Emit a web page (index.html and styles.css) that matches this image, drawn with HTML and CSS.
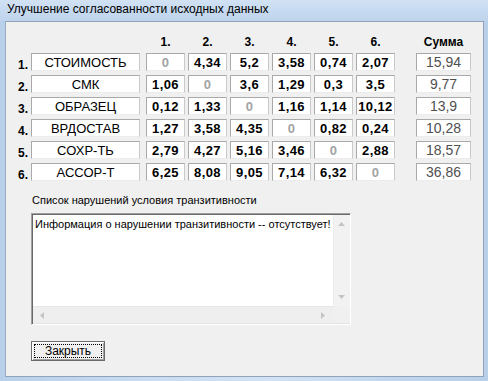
FILE: index.html
```html
<!DOCTYPE html>
<html lang="ru">
<head>
<meta charset="utf-8">
<title>Улучшение согласованности исходных данных</title>
<link rel="stylesheet" href="styles.css">
</head>
<body>
<div class="window">
  <div class="titlebar"><span class="title">Улучшение согласованности исходных данных</span></div>
  <div class="client">
    <div class="matrix">
      <div class="hd"></div><div class="hd"></div>
      <div class="hd">1.</div><div class="hd">2.</div><div class="hd">3.</div><div class="hd">4.</div><div class="hd">5.</div><div class="hd">6.</div>
      <div class="hd"></div><div class="hd sum-hd">Сумма</div>

      <div class="rl">1.</div><div class="name">СТОИМОСТЬ</div>
      <div class="cell diag">0</div><div class="cell">4,34</div><div class="cell">5,2</div><div class="cell">3,58</div><div class="cell">0,74</div><div class="cell">2,07</div>
      <div></div><div class="sum">15,94</div>

      <div class="rl">2.</div><div class="name">СМК</div>
      <div class="cell">1,06</div><div class="cell diag">0</div><div class="cell">3,6</div><div class="cell">1,29</div><div class="cell">0,3</div><div class="cell">3,5</div>
      <div></div><div class="sum">9,77</div>

      <div class="rl">3.</div><div class="name">ОБРАЗЕЦ</div>
      <div class="cell">0,12</div><div class="cell">1,33</div><div class="cell diag">0</div><div class="cell">1,16</div><div class="cell">1,14</div><div class="cell">10,12</div>
      <div></div><div class="sum">13,9</div>

      <div class="rl">4.</div><div class="name">ВРДОСТАВ</div>
      <div class="cell">1,27</div><div class="cell">3,58</div><div class="cell">4,35</div><div class="cell diag">0</div><div class="cell">0,82</div><div class="cell">0,24</div>
      <div></div><div class="sum">10,28</div>

      <div class="rl">5.</div><div class="name">СОХР-ТЬ</div>
      <div class="cell">2,79</div><div class="cell">4,27</div><div class="cell">5,16</div><div class="cell">3,46</div><div class="cell diag">0</div><div class="cell">2,88</div>
      <div></div><div class="sum">18,57</div>

      <div class="rl">6.</div><div class="name">АССОР-Т</div>
      <div class="cell">6,25</div><div class="cell">8,08</div><div class="cell">9,05</div><div class="cell">7,14</div><div class="cell">6,32</div><div class="cell diag">0</div>
      <div></div><div class="sum">36,86</div>
    </div>

    <div class="memo-label">Список нарушений условия транзитивности</div>
    <div class="memo">
      <div class="memo-text">Информация о нарушении транзитивности -- отсутствует!</div>
      <div class="vscroll">
        <svg class="arrow" width="7" height="4" viewBox="0 0 7 4"><path d="M0 4 L3.5 0 L7 4 Z" fill="#c4c4c4"/></svg>
        <svg class="arrow" width="7" height="4" viewBox="0 0 7 4"><path d="M0 0 L3.5 4 L7 0 Z" fill="#c4c4c4"/></svg>
      </div>
      <div class="hscroll">
        <svg class="arrow" width="4" height="7" viewBox="0 0 4 7"><path d="M4 0 L0 3.5 L4 7 Z" fill="#c4c4c4"/></svg>
        <svg class="arrow" width="4" height="7" viewBox="0 0 4 7"><path d="M0 0 L4 3.5 L0 7 Z" fill="#c4c4c4"/></svg>
      </div>
      <div class="corner"></div>
    </div>

    <button class="btn"><span class="focus">Закрыть</span></button>
  </div>
</div>
</body>
</html>
```
FILE: styles.css
```css
html, body {
  margin: 0;
  padding: 0;
}
body {
  width: 488px;
  height: 381px;
  overflow: hidden;
  background: linear-gradient(180deg, #c4d8ee 0%, #bcd3ec 60%, #b4cce8 100%);
  font-family: "Liberation Sans", Arial, sans-serif;
}
.window {
  width: 488px;
  height: 381px;
  display: flex;
  flex-direction: column;
  background: linear-gradient(90deg, #b9d0ea 0%, #c9dcf1 30%, #d3e3f4 55%, #c2d7ee 80%, #b8cfe9 100%);
}
.titlebar {
  height: 21px;
  flex: none;
  display: flex;
  align-items: center;
  padding-left: 7px;
  background: linear-gradient(180deg, #d2e2f4 0%, #c6daf0 50%, #bfd4ec 100%);
}
.title {
  font-family: "Liberation Sans", Arial, sans-serif;
  font-size: 12px;
  color: #000;
  position: relative;
  top: -2px;
}
.client {
  flex: 1;
  margin: 0 4px 4px 5px;
  background: #f0f0f0;
  border: 1px solid #8fa3ba;
  border-left-color: #97abc1;
  display: flex;
  flex-direction: column;
  align-items: flex-start;
}
.matrix {
  display: grid;
  grid-template-columns: 19px 115px repeat(6, 42px) 18px 55px;
  grid-template-rows: 14px repeat(6, 18px);
  row-gap: 4px;
  margin: 13px 0 0 6px;
}
.hd {
  font-weight: bold;
  font-size: 12px;
  line-height: 14px;
  text-align: center;
  width: 39px;
  color: #000;
}
.sum-hd {
  width: 55px;
}
.rl {
  font-weight: bold;
  font-size: 12px;
  line-height: 14px;
  padding: 5px 0 0 6px;
  color: #000;
}
.name, .cell, .sum {
  box-sizing: border-box;
  height: 18px;
  background: #fff;
  border: 1px solid #a9a9a9;
  border-right-color: #c9c9c9;
  border-bottom-color: #ececec;
  display: flex;
  align-items: center;
  justify-content: center;
  white-space: nowrap;
}
.name {
  width: 109px;
  font-size: 13px;
  color: #000;
}
.cell {
  width: 39px;
  font-size: 13px;
  font-weight: bold;
  letter-spacing: 0.4px;
  color: #000;
}
.cell.diag {
  color: #a3a3a3;
}
.sum {
  width: 55px;
  font-size: 14px;
  color: #505050;
}
.memo-label {
  margin: 12px 0 0 26px;
  font-size: 11px;
  line-height: 14px;
  color: #000;
}
.memo {
  margin: 6px 0 0 25px;
  box-sizing: border-box;
  width: 320px;
  height: 112px;
  background: #fff;
  border: 1px solid;
  border-color: #a0a0a0 #ffffff #ffffff #a0a0a0;
  box-shadow: inset 1px 1px 0 #696969, inset -1px -1px 0 #e3e3e3;
  padding: 1px 1px 1px 1px;
  display: grid;
  grid-template-columns: 1fr 17px;
  grid-template-rows: 1fr 17px;
}
.memo-text {
  font-size: 11px;
  line-height: 13px;
  padding: 3px 2px;
  color: #000;
  white-space: nowrap;
}
.vscroll {
  background: #f2f2f2;
  border-left: 1px solid #ececec;
  display: flex;
  flex-direction: column;
  justify-content: space-between;
  align-items: center;
  padding: 7px 0 7px;
}
.hscroll {
  background: #efefef;
  border-top: 1px solid #e6e6e6;
  display: flex;
  justify-content: space-between;
  align-items: center;
  padding: 0 8px 0 7px;
}
.corner {
  background: #f0f0f0;
}
.arrow {
  display: block;
}
.btn {
  margin: 16px 0 0 25px;
  box-sizing: border-box;
  width: 74px;
  height: 20px;
  padding: 2px;
  background: #f0f0f0;
  border: 1px solid #6b6b6b;
  box-shadow: inset 1px 1px 0 #ffffff, inset -1px -1px 0 #a0a0a0;
  font-family: "Liberation Sans", Arial, sans-serif;
  font-size: 12px;
  color: #000;
  display: flex;
}
.focus {
  flex: 1;
  border: 1px dotted #000;
  display: flex;
  align-items: center;
  justify-content: center;
  line-height: 12px;
}
```
